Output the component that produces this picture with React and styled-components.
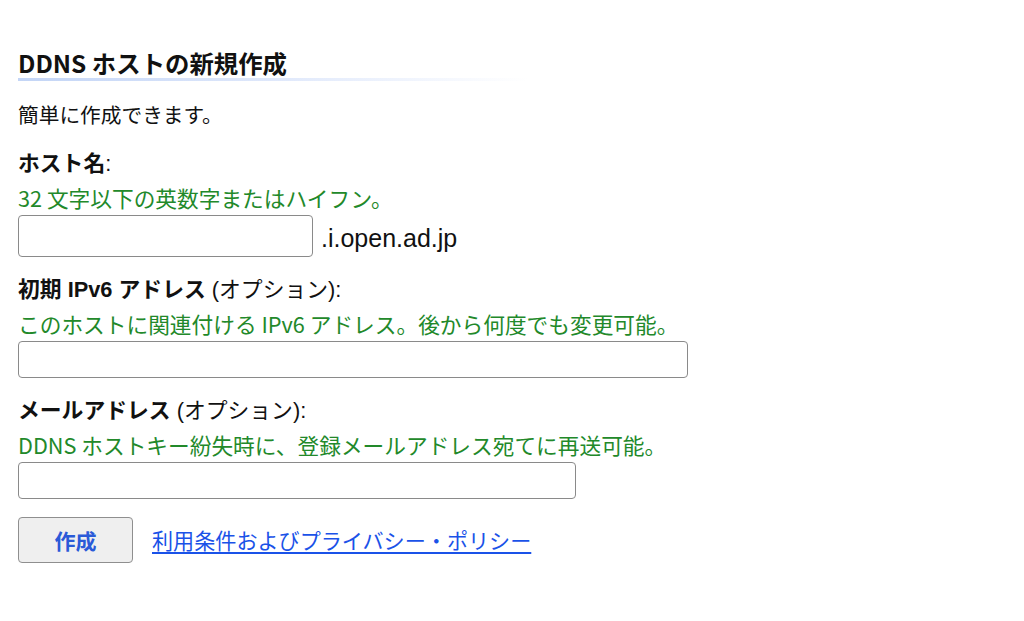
import React from "react";
import styled, { createGlobalStyle } from "styled-components";

const Global = createGlobalStyle`
  html, body { margin: 0; padding: 0; background: #ffffff; }
  body {
    font-family: "Liberation Sans", "Noto Sans CJK JP", sans-serif;
    color: #111111;
    font-size: 21.8px;
  }
  * { box-sizing: border-box; }
`;

const Page = styled.main`
  padding: 47px 18px 40px 18px;
  display: flex;
  flex-direction: column;
`;

const Title = styled.h2`
  margin: 0;
  width: 510px;
  font-family: "Noto Sans CJK JP", sans-serif;
  font-size: 24.4px;
  font-weight: 700;
  line-height: 31px;
  padding-bottom: 3px;
  background: linear-gradient(to right, #c3d5f6 0%, #dfe8fb 50%, #ffffff 100%) left bottom / 100% 3px no-repeat;
  color: #111;
`;

const Lead = styled.p`
  margin: 16px 0 0 0;
  font-family: "Noto Sans CJK JP", sans-serif;
  font-size: 20.7px;
  line-height: 34px;
`;

const Field = styled.div`
  margin-top: 16px;
  display: flex;
  flex-direction: column;
  align-items: flex-start;
`;

const Label = styled.label`
  line-height: 34px;
  font-weight: 400;
`;

const Strong = styled.b`
  font-weight: 700;
`;

const Hint = styled.div`
  font-family: "Noto Sans CJK JP", sans-serif;
  font-size: 21.7px;
  line-height: 34px;
  color: #22892a;
`;

const InputRow = styled.div`
  display: flex;
  align-items: center;
  gap: 8px;
`;

const TextInput = styled.input`
  width: ${(p) => p.$w}px;
  height: ${(p) => p.$h}px;
  border: 1px solid #8a8a8a;
  border-radius: 4px;
  background: #fff;
  font-size: 20px;
  padding: 0 8px;
  outline: none;
`;

const Suffix = styled.span`
  font-family: "Liberation Sans", Arial, sans-serif;
  font-size: 25px;
  color: #111;
  padding-top: 4px;
`;

const Actions = styled.div`
  margin-top: 18px;
  display: flex;
  align-items: center;
  gap: 19px;
`;

const Button = styled.button`
  width: 115px;
  height: 46px;
  background: #efefef;
  border: 1px solid #8f8f8f;
  border-radius: 4px;
  font-family: "Noto Sans CJK JP", sans-serif;
  font-size: 21px;
  font-weight: 700;
  color: #2a5ad8;
  cursor: pointer;
`;

const Link = styled.a`
  font-family: "Noto Sans CJK JP", sans-serif;
  color: #1a52e8;
  text-decoration: underline;
  text-underline-offset: 3px;
  font-size: 21.1px;
`;

export default function App() {
  return (
    <>
      <Global />
      <Page>
        <Title>DDNS ホストの新規作成</Title>
        <Lead>簡単に作成できます。</Lead>

        <Field>
          <Label>
            <Strong>ホスト名</Strong>:
          </Label>
          <Hint>32 文字以下の英数字またはハイフン。</Hint>
          <InputRow>
            <TextInput type="text" $w={295} $h={42} />
            <Suffix>.i.open.ad.jp</Suffix>
          </InputRow>
        </Field>

        <Field>
          <Label>
            <Strong>初期 IPv6 アドレス</Strong> (オプション):
          </Label>
          <Hint>このホストに関連付ける IPv6 アドレス。後から何度でも変更可能。</Hint>
          <TextInput type="text" $w={670} $h={37} />
        </Field>

        <Field>
          <Label>
            <Strong>メールアドレス</Strong> (オプション):
          </Label>
          <Hint>DDNS ホストキー紛失時に、登録メールアドレス宛てに再送可能。</Hint>
          <TextInput type="text" $w={558} $h={37} />
        </Field>

        <Actions>
          <Button type="button">作成</Button>
          <Link href="#">利用条件およびプライバシー・ポリシー</Link>
        </Actions>
      </Page>
    </>
  );
}
